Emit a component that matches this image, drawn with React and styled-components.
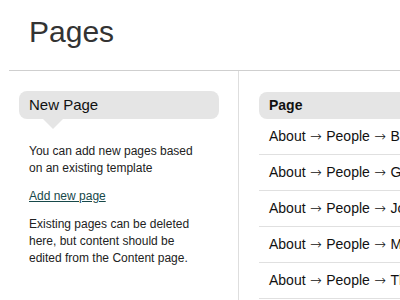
import React from 'react';
import styled, { createGlobalStyle } from 'styled-components';

const GlobalStyle = createGlobalStyle`
	body {
		margin: 0;
		background: #fff;
		font-family: "Liberation Sans", Arial, sans-serif;
		color: #222;
	}
`;

const pages = [
	{ id: 1, trail: ['About', 'People', 'Bill Jones'] },
	{ id: 2, trail: ['About', 'People', 'Gary Smith'] },
	{ id: 3, trail: ['About', 'People', 'John Brown'] },
	{ id: 4, trail: ['About', 'People', 'Mary Green'] },
	{ id: 5, trail: ['About', 'People', 'Thomas White'] },
];

const App = () => {
	return (
		<Wrap>
			<GlobalStyle />
			<Header>
				<Title>Pages</Title>
			</Header>
			<Main>
				<Sidebar>
					<Callout>New Page</Callout>
					<Text>You can add new pages based on an existing template</Text>
					<Text><Link href="#">Add new page</Link></Text>
					<Text>Existing pages can be deleted here, but content should be edited from the Content page.</Text>
				</Sidebar>
				<Listing>
					<TableHead>Page</TableHead>
					{pages.map(page => (
						<Row key={page.id}>
							{page.trail.map((step, i) => (
								<React.Fragment key={step}>
									{i > 0 && <Arrow> {'\u2192'} </Arrow>}
									{step}
								</React.Fragment>
							))}
						</Row>
					))}
				</Listing>
			</Main>
		</Wrap>
	);
};

const Wrap = styled.div`
	width: 400px;
	height: 300px;
	overflow: hidden;
`;

const Header = styled.header`
	margin-left: 9px;
	height: 71px;
	border-bottom: 1px solid #cfcfcf;
	box-sizing: border-box;
	padding: 15px 0 0 20px;
`;

const Title = styled.h1`
	margin: 0;
	font-size: 30px;
	line-height: 34px;
	font-weight: normal;
	color: #333;
`;

const Main = styled.div`
	display: grid;
	grid-template-columns: 230px 1fr;
	margin-left: 9px;
	height: 229px;
`;

const Sidebar = styled.aside`
	border-right: 1px solid #dedede;
	padding: 20px 10px 0;
`;

const Callout = styled.h2`
	position: relative;
	margin: 0 0 24px;
	width: 200px;
	height: 28px;
	box-sizing: border-box;
	padding-left: 10px;
	border-radius: 8px;
	background: #e5e5e5;
	font-size: 15px;
	line-height: 28px;
	font-weight: normal;
	color: #111;

	&::after {
		content: '';
		position: absolute;
		left: 24px;
		bottom: -10px;
		border-left: 10px solid transparent;
		border-right: 10px solid transparent;
		border-top: 10px solid #e5e5e5;
	}
`;

const Text = styled.p`
	margin: 0 0 11px;
	padding: 0 10px;
	max-width: 172px;
	font-size: 12px;
	line-height: 17px;
	color: #222;
`;

const Link = styled.a`
	color: #17494a;
	text-decoration: underline;
`;

const Listing = styled.section`
	padding: 21px 0 0 20px;
	overflow: hidden;
	white-space: nowrap;
`;

const TableHead = styled.div`
	height: 27px;
	padding-left: 10px;
	border-radius: 8px 0 0 8px;
	background: #e5e5e5;
	font-size: 14px;
	font-weight: bold;
	line-height: 27px;
	color: #111;
`;

const Row = styled.div`
	height: 35px;
	padding-left: 10px;
	border-bottom: 1px solid #e0e0e0;
	font-size: 14px;
	line-height: 35px;
	color: #111;
`;

const Arrow = styled.span`
	font-family: "DejaVu Sans", sans-serif;
	font-size: 14px;
	font-weight: 300;
`;

export default App;
